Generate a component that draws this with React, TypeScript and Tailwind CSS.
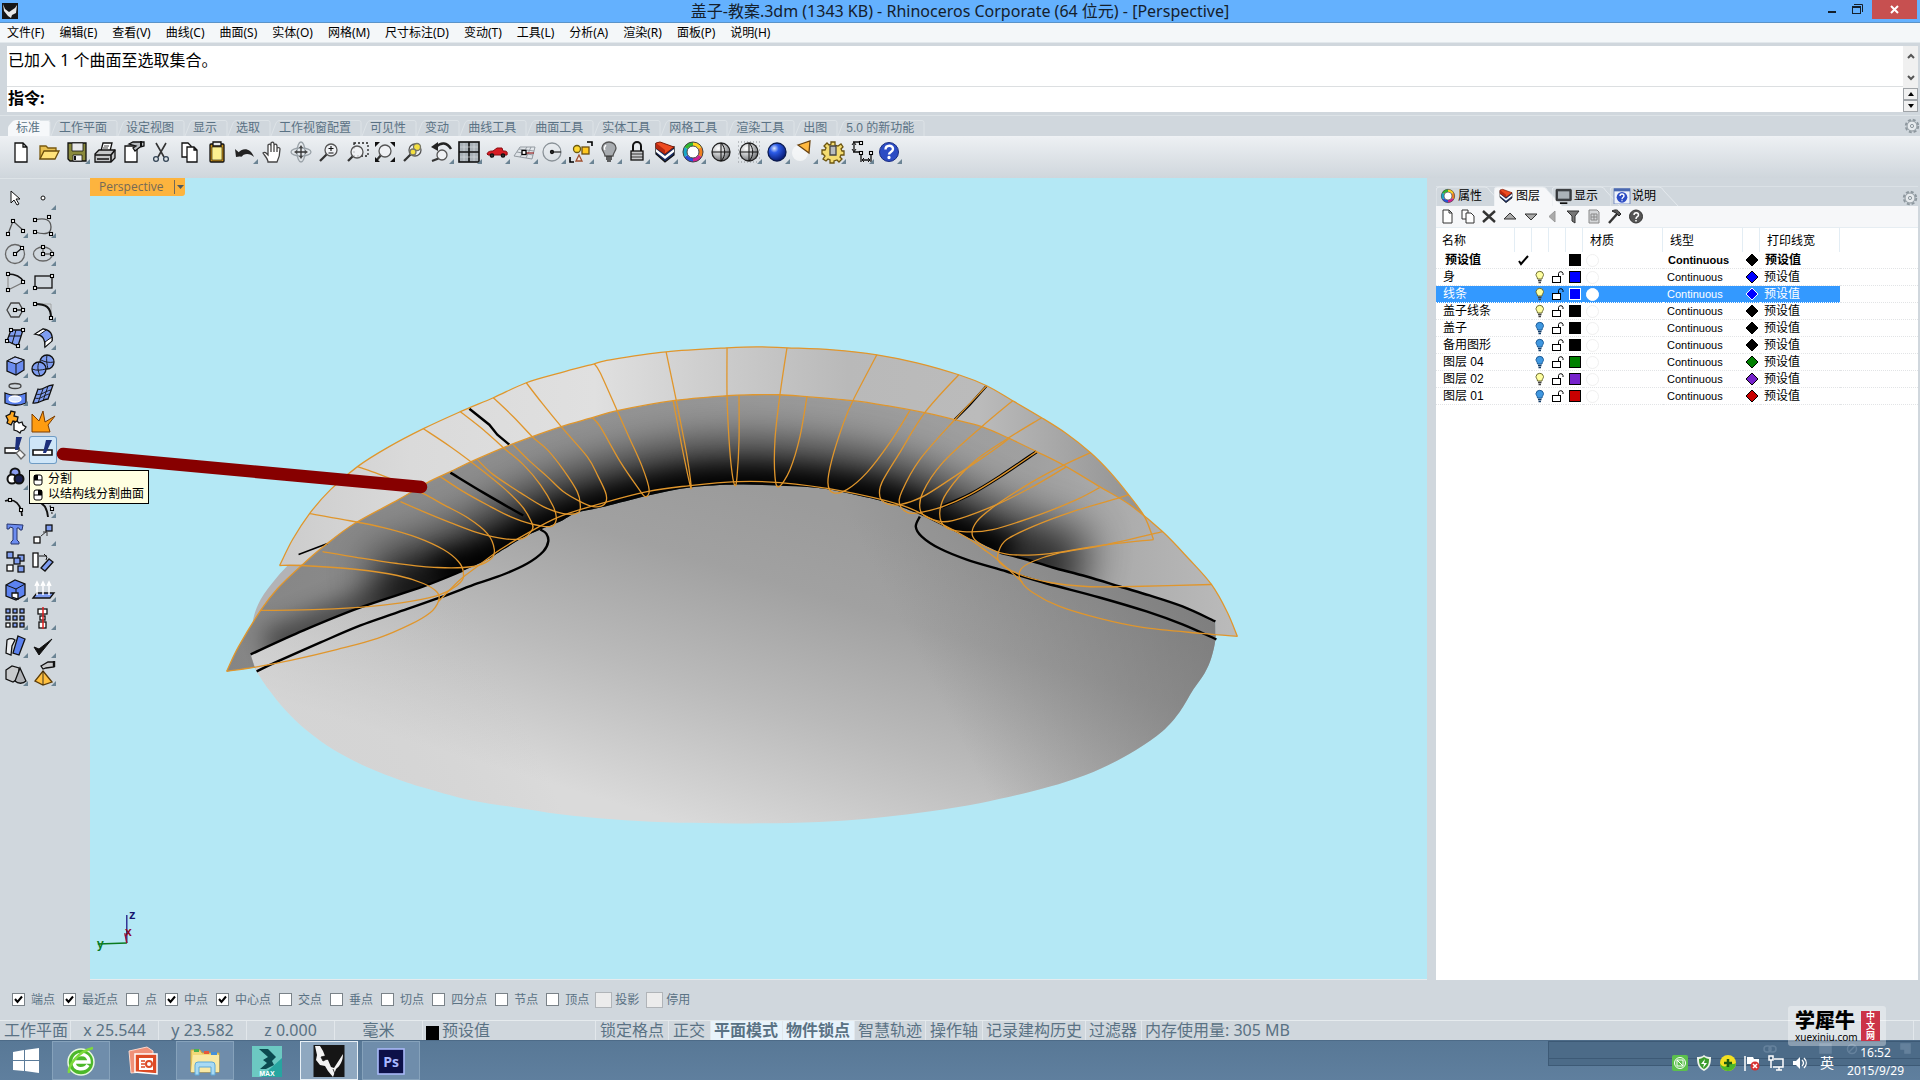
import React from "react";

const UI = "font-['Noto_Sans','Noto_Sans_CJK_SC',sans-serif]";
const SIM = "font-['Liberation_Sans','Noto_Sans_CJK_SC',sans-serif]";

/* ---------- curve helpers ---------- */

type Pt = [number, number];
const parse = (s: string): Pt[] =>
  s.trim().split(/\s+/).map((p) => p.split(",").map(Number) as Pt);

/** Catmull-Rom spline through the listed points, as SVG path data. */
const smooth = (s: string, start = "M") => {
  const p = parse(s);
  let d = `${start}${p[0][0]} ${p[0][1]}`;
  for (let i = 0; i < p.length - 1; i++) {
    const a = p[Math.max(i - 1, 0)];
    const b = p[i];
    const c = p[i + 1];
    const e = p[Math.min(i + 2, p.length - 1)];
    d += `C${(b[0] + (c[0] - a[0]) / 6).toFixed(1)} ${(b[1] + (c[1] - a[1]) / 6).toFixed(1)} ${(c[0] - (e[0] - b[0]) / 6).toFixed(1)} ${(c[1] - (e[1] - b[1]) / 6).toFixed(1)} ${c[0]} ${c[1]}`;
  }
  return d;
};
const reverse = (s: string) => s.trim().split(/\s+/).reverse().join(" ");
const shape = (...segs: string[]) =>
  segs.map((s, i) => smooth(s, i ? "L" : "M")).join("") + "Z";

/* ---------- model geometry ---------- */

const OUTER =
  "279,566 292,540 309,514 330,490 357,467 387,448 423,429 460,412 493,398 526,383 560,373 594,364 610,360 666,352 727,348 757,347 787,348 833,350 877,355 917,363 959,375 987,386 1013,401 1042,418 1067,434 1091,453 1110,472 1129,495 1145,517 1154,540";
const RIM =
  "226,672 238,647 260,611 277,589 302,565 323,547 354,524 398,500 427,483 450,472 473,461 508,446 532,437 561,427 592,418 617,411 673,401 727,396 753,395 780,395 807,397 853,401 887,406 925,413 955,420 982,427 1010,439 1037,452 1063,465 1100,487 1130,505 1163,532 1190,560 1212,585 1228,613 1238,637";
const INNER_RIGHT = "1216,622 1183,607 1150,596 1120,587 1087,577 1053,568 1027,560 1000,553";
const INNER_MID =
  "1000,553 977,542 957,533 920,515 900,507 880,501 840,492 813,488 777,486 737,485 690,488 648,496 605,507 577,513 560,522 540,530 523,538 503,550 487,560 463,571";
const INNER_LEFT = "463,571 423,587 360,608 303,631 250,655";
const LOOP_LEFT =
  "256,672 277,662 320,643 360,626 397,613 440,598 477,584 503,575 527,564 543,552 548,542 546,534 540,530";
const LOOP_RIGHT =
  "1217,640 1183,625 1147,612 1100,598 1047,584 1007,572 967,560 940,549 922,537 916,527 920,517";
const BELLY =
  "256,672 268,690 285,711 306,731 334,751 367,768 400,781 429,790 470,801 514,808 560,815 612,820 665,823 720,824 776,824 833,822 882,818 931,812 980,804 1029,793 1068,782 1102,769 1136,751 1163,732 1180,713 1194,690 1205,674 1212,658 1216,640 1216,622";

const ISO = [
  "1238,637 1202,634 1143,628 1100,619 1060,607 1033,593 1021,581 1021,570 1033,562 1057,554 1107,545 1163,532",
  "226,672 253,668 290,661 337,650 377,639 410,625 430,613 438,602 437,593 423,584 397,576 357,570 300,566 279,566",
  "260,611 320,610 370,607 410,602 440,595 460,583 463,573 458,562 443,550 417,538 383,528 343,520 309,514",
  "322,552 357,558 397,564 437,568 473,567 490,560 494,550 487,534 467,518 443,505 423,494 397,482 377,474 357,467",
  "400,502 423,512 450,523 477,533 503,539 522,539 532,530 531,522 522,507 503,488 477,467 450,447 423,429",
  "440,477 463,492 490,507 510,517 530,524 550,527 556,520 553,507 540,485 523,465 503,448 483,430 460,412",
  "477,460 493,475 520,493 543,507 563,514 578,513 580,505 577,492 563,470 547,450 532,437 513,417 493,398",
  "513,445 530,462 547,477 563,492 580,502 593,507 604,505 606,495 598,477 587,457 561,427 543,405 526,383",
  "592,418 600,427 620,462 637,487 645,497 649,490 642,467 630,440 617,411 600,373 594,364",
  "673,401 683,453 691,489 687,457 676,400 666,352",
  "739,396 739,440 737,477 735,486 732,473 729,440 727,396 727,348",
  "807,397 800,437 790,470 779,487 775,477 775,440 780,395 787,348",
  "910,411 890,443 867,473 847,490 833,493 828,483 832,460 843,425 853,401 877,355",
  "959,375 925,413 900,453 882,483 880,497 887,504 900,505 923,497 953,478 980,460 1000,446 1009,439",
  "987,386 955,420 920,460 902,492 900,505 908,513 920,513 943,507 970,495 1000,477 1037,452",
  "1013,401 982,427 943,463 923,493 921,512 933,520 953,521 997,505 1033,487 1067,467",
  "1042,418 1006,440 973,463 947,493 940,513 945,527 963,532 993,530 1040,515 1077,500 1100,488",
  "1091,453 1063,466 1033,482 997,505 977,522 973,537 987,548 1010,555 1050,554 1100,546 1154,540",
  "1129,495 1117,499 1073,512 1033,527 1007,540 999,552 1000,563 1020,575 1050,583 1087,587 1133,587 1212,585",
  "438,602 460,580 477,567 500,550 530,532 557,518 590,507 647,492 690,486 737,482 780,483 840,491 900,505 933,520 967,538 987,552 1000,562 1023,583",
];

function Scene() {
  const ring = shape(RIM, "1216,635 1216,622", INNER_RIGHT, INNER_MID, INNER_LEFT, "254,668 226,672");
  const belly = shape(BELLY, INNER_RIGHT, INNER_MID, INNER_LEFT);
  return (
    <svg viewBox="90 178 1337 802" className="block h-full w-full" aria-label="Perspective view of the lid model">
      <defs>
        <linearGradient id="belly" gradientUnits="userSpaceOnUse" x1="800" y1="500" x2="700" y2="830">
          <stop offset="0" stopColor="#9b9b9b" />
          <stop offset="0.25" stopColor="#a1a1a1" />
          <stop offset="0.6" stopColor="#bababa" />
          <stop offset="1" stopColor="#dadada" />
        </linearGradient>
        <linearGradient id="side" gradientUnits="userSpaceOnUse" x1="960" y1="740" x2="1216" y2="610">
          <stop offset="0" stopColor="#747474" stopOpacity="0" />
          <stop offset="1" stopColor="#747474" stopOpacity="0.75" />
        </linearGradient>
        <linearGradient id="glow" gradientUnits="userSpaceOnUse" x1="250" y1="720" x2="480" y2="620">
          <stop offset="0" stopColor="#d2d2d2" stopOpacity="0.6" />
          <stop offset="1" stopColor="#c0c0c0" stopOpacity="0" />
        </linearGradient>
        <linearGradient id="band" gradientUnits="userSpaceOnUse" x1="279" y1="0" x2="1154" y2="0">
          <stop offset="0" stopColor="#cccccc" />
          <stop offset="0.15" stopColor="#dadada" />
          <stop offset="0.36" stopColor="#e0e0e0" />
          <stop offset="0.48" stopColor="#cfcfcf" />
          <stop offset="0.65" stopColor="#b9b9b9" />
          <stop offset="0.8" stopColor="#bbbbbb" />
          <stop offset="1" stopColor="#8f8f8f" />
        </linearGradient>
        <linearGradient id="ringfill" gradientUnits="userSpaceOnUse" x1="226" y1="0" x2="1238" y2="0">
          <stop offset="0" stopColor="#858585" />
          <stop offset="0.5" stopColor="#989898" />
          <stop offset="0.8" stopColor="#a0a0a0" />
          <stop offset="1" stopColor="#bbbbbb" />
        </linearGradient>
        <clipPath id="ringclip"><path d={ring} /></clipPath>
        <filter id="wide" filterUnits="userSpaceOnUse" x="90" y="178" width="1337" height="802"><feGaussianBlur stdDeviation="22" /></filter>
        <filter id="tight" filterUnits="userSpaceOnUse" x="90" y="178" width="1337" height="802"><feGaussianBlur stdDeviation="11" /></filter>
      </defs>

      <path d={shape("298,555 277,577 260,600 252,623 250,655 256,672", "256,672 500,640 463,560")} fill="#b3b3b6" />
      <path d={belly} fill="url(#belly)" />
      <path d={belly} fill="url(#side)" />
      <path d={belly} fill="url(#glow)" />
      <path d={shape(OUTER, reverse(RIM).split(" ").slice(5, -4).join(" "))} fill="url(#band)" />
      <path d={ring} fill="url(#ringfill)" />
      <g clipPath="url(#ringclip)" fill="none" stroke="#000">
        <path d={smooth("380,600 463,571 503,550 540,530 605,507 690,488 777,486 880,501 957,533 1000,553 1080,578")} strokeWidth="84" opacity="0.75" filter="url(#wide)" />
        <path d={smooth("440,580 503,552 540,532 605,509 690,490 777,488 880,503 957,535 1010,557")} strokeWidth="36" filter="url(#tight)" />
        <path d={smooth("270,655 360,618 463,571")} strokeWidth="50" opacity="0.45" filter="url(#tight)" />
      </g>

      <g fill="none" stroke="#000" strokeWidth="2.4">
        <path d={smooth(INNER_LEFT)} />
        <path d={smooth(INNER_RIGHT)} />
        <path d={smooth(LOOP_LEFT)} />
        <path d={smooth(LOOP_RIGHT)} />
        <path d="M469 409 489 425 497 435 509 445" />
        <path d={smooth("450,473 483,493 523,516")} />
        <path d="M298 555 327 544" strokeWidth="1.5" />
        <path d="M987 386 970 405 955 420" />
        <path d={smooth("1037,452 1000,477 970,495 943,507")} strokeWidth="3.4" />
      </g>
      <g fill="none" stroke="#e0962c" strokeWidth="1.3">
        <path d={smooth(OUTER)} />
        <path d={smooth(RIM)} />
        {ISO.map((s) => <path key={s} d={smooth(s)} />)}
      </g>

      <g fill="none" strokeWidth="1.4">
        <path d="M126 944V916" stroke="#28288c" />
        <path d="M126 944 97 945" stroke="#0a7a1e" />
        <path d="M126 944 124 934" stroke="#9c1030" />
      </g>
      <g className="font-['Liberation_Mono',monospace] text-[12px] font-bold">
        <text x="128" y="920" fill="#14146e">z</text>
        <text x="124" y="937" fill="#8c0828">x</text>
        <text x="96" y="949" fill="#0a7a1e">y</text>
      </g>
    </svg>
  );
}

/* ---------- icons (28 × 28 grid) ---------- */

const Ico = ({ children, corner = false, label }: { children: React.ReactNode; corner?: boolean; label: string }) => (
  <button type="button" aria-label={label} className="block h-7 w-7 shrink-0">
    <svg viewBox="0 0 28 28" className="block h-7 w-7" fill="none" stroke="#111" strokeWidth="1.3">
      {children}
      {corner && <path d="M27 21v5h-5z" fill="#6b8494" stroke="none" />}
    </svg>
  </button>
);

const Node = ({ x, y }: { x: number; y: number }) => (
  <rect x={x - 1.5} y={y - 1.5} width="3" height="3" fill="#fff" stroke="#000" strokeWidth="1.1" />
);
const Lens = ({ x = 16, y = 12, r = 6 }: { x?: number; y?: number; r?: number }) => (
  <>
    <path d={`M${x - r * 0.7} ${y + r * 0.7}L5 23`} strokeWidth="2.2" stroke="#333" />
    <circle cx={x} cy={y} r={r} fill="#f2f4f6" fillOpacity="0.8" stroke="#555" />
  </>
);
const Wheel = () => (
  <g strokeWidth="4">
    <path d="M14 6a8 8 0 0 1 7 4" stroke="#ffd21e" />
    <path d="M21 10a8 8 0 0 1 0 8" stroke="#f08020" />
    <path d="M21 18a8 8 0 0 1-7 4" stroke="#d02090" />
    <path d="M14 22a8 8 0 0 1-7-4" stroke="#2a50d8" />
    <path d="M7 18a8 8 0 0 1 0-8" stroke="#18a8c8" />
    <path d="M7 10a8 8 0 0 1 7-4" stroke="#30b830" />
    <circle cx="14" cy="14" r="10" stroke="#444" strokeWidth="1" />
    <circle cx="14" cy="14" r="6" stroke="#444" strokeWidth="1" fill="#fff" />
  </g>
);
const LayersMark = () => (
  <>
    <path d="M5 6l9 6 9-3v8l-9 7-9-8z" fill="#1c2f66" stroke="#111" />
    <path d="M5 11l9 7 9-7v3l-9 7-9-7z" fill="#fff" stroke="none" />
    <path d="M5 5l4-1 14 5-9 7-9-6z" fill="#ee4a20" stroke="#7a1a08" strokeWidth="1" />
    <path d="M5 5l9 7v4l-9-6z" fill="#b82810" stroke="none" />
  </>
);
const Ball = () => (
  <>
    <circle cx="14" cy="14" r="9" fill="url(#gs)" stroke="#222" />
    <path d="M14 5v18M5 14h18M14 5c5 5 5 13 0 18" strokeWidth="1" />
  </>
);

const TOOLS: [string, boolean, React.ReactNode][] = [
  ["新建", false, <path d="M8 5h8l4 4v15H8zM16 5v4h4" fill="#fff" />],
  ["打开", false, <><path d="M5 21V8h6l2 2h8v4" fill="#e8c050" stroke="#7a5a10" /><path d="M5 21l4-8h15l-4 8z" fill="#ffe27a" stroke="#6b4e0c" /></>],
  ["保存", true, <><path d="M5 5h18v18H7l-2-2z" fill="#8a8a3c" /><path d="M9 5h11v8H9z" fill="#e8e8ea" strokeWidth="0.8" /><path d="M10 17h9v6h-9z" fill="#f4f4f4" strokeWidth="0.8" /><path d="M12 18v4" strokeWidth="2" /></>],
  ["打印", false, <><path d="M10 13l2-8h9l-2 8z" fill="#fff" /><path d="M13 8h5M12 10h5" strokeWidth="0.8" /><path d="M4 16l4-4h16v8l-4 4H4z" fill="#c4c6c8" /><path d="M4 17h16v7M20 17l4-5M6 21h12" strokeWidth="1.6" /></>],
  ["属性", false, <><path d="M6 8h12v16H6z" fill="#fff" /><path d="M10 6l4-2h11v4l-4 1-5 4-2-3 3-2z" fill="#b8bcc0" /><path d="M22 3v6" strokeWidth="2" /></>],
  ["剪切", false, <><path d="M9 5l8 14M19 5l-8 14" stroke="#333" strokeWidth="1.6" /><circle cx="9" cy="21" r="2.4" stroke="#345" /><circle cx="19" cy="21" r="2.4" stroke="#345" /></>],
  ["复制", false, <><path d="M7 5h6l3 3v11H7z" fill="#fff" /><path d="M12 9h7l3 3v12H12zM19 9v3h3" fill="#fff" /></>],
  ["粘贴", false, <><rect x="7" y="6" width="14" height="18" rx="1" fill="#c89018" /><path d="M9 9h10v13H9z" fill="#fbf090" strokeWidth="0.6" /><path d="M10 4h8v4h-8z" fill="#e8eaec" /></>],
  ["撤销", true, <><path d="M7 15c4-5 12-6 16 4-4-4-10-4-13 0z" fill="#222" stroke="none" /><path d="M4 11l8 7-7 1z" fill="#222" stroke="none" /></>],
  ["平移", false, <path d="M9 24c0-3-3-6-5-9 2-2 4 1 5 2V7c2-2 3 0 3 1V5c2-2 3 0 3 1v8-7c2-2 3 0 3 1v6-4c2-1 3 0 3 1 0 6-1 9-3 13zM12 8v6" fill="#fff" stroke="#444" />],
  ["旋转视图", false, <><ellipse cx="14" cy="14" rx="4" ry="10" stroke="#9aa2a8" /><ellipse cx="14" cy="14" rx="10" ry="4" stroke="#9aa2a8" /><path d="M14 9v10M9 14h10" stroke="#333" /><path d="M14 7l2 3h-4zM14 21l2-3h-4zM21 14l-3-2v4zM7 14l3-2v4z" fill="#444" stroke="none" /></>],
  ["缩放", false, <><Lens /><path d="M16 8v5M13.500 10.500h5M13.500 15h5" strokeWidth="1.1" /></>],
  ["框选缩放", false, <><rect x="11" y="5" width="14" height="13" strokeDasharray="2 2" stroke="#222" /><Lens x={14} y={14} /></>],
  ["缩放至范围", false, <><Lens x={14} y={13} /><path d="M4 9V4h5zM24 9V4h-5zM4 19v5h5zM24 19v5h-5z" fill="#111" stroke="none" /></>],
  ["缩放选取", false, <><Lens /><circle cx="18" cy="9" r="3.500" fill="#f4e040" stroke="#776" /><circle cx="14" cy="14" r="3" fill="#f4e040" stroke="#776" /></>],
  ["复原视图", true, <><Lens x={15} y={17} r={5} /><path d="M9 9c5-5 11-5 15 2" strokeWidth="2.400" stroke="#222" /><path d="M4 9l7-5v9z" fill="#222" stroke="none" /></>],
  ["四视图", true, <><rect x="4" y="4" width="20" height="20" fill="#aab2b8" strokeWidth="1.600" /><path d="M14 4v20M4 14h20" strokeWidth="1.600" /><path d="M9 5v8M19 5v8M9 15v8M19 15v8M5 9h18M5 19h18" stroke="#d8dce0" strokeWidth="0.600" /></>],
  ["右视图", true, <><path d="M4 16c1-3 4-3 6-3l4-3h5l1 3c3 0 5 0 4 4H5z" fill="#d81c24" stroke="#8a0c10" strokeWidth="1" /><circle cx="9" cy="17.500" r="1.700" fill="#333" /><circle cx="20" cy="17.500" r="1.700" fill="#333" /></>],
  ["工作平面", true, <><path d="M3 18l6-9h15l-3 12zM6 14l16 3M8 11l15 2M9 19l7-10M15 20l5-11" stroke="#8a9298" strokeWidth="0.900" /><path d="M14 15h9" stroke="#a03030" /><rect x="11" y="12.500" width="4" height="4" fill="#fff" stroke="#000" /></>],
  ["图元", true, <><circle cx="13" cy="14" r="9" stroke="#8a9298" /><path d="M13 14h9" stroke="#333" /><circle cx="13" cy="14" r="1.500" fill="#333" /></>],
  ["选取", true, <><path d="M20 4h5v4M3 19v5h4" stroke="#000" strokeWidth="1.600" /><circle cx="10" cy="11" r="3.500" fill="#ffd830" stroke="#6b5a10" /><rect x="15" y="9" width="7" height="7" fill="#ffc820" stroke="#6b4e10" /><path d="M12 17l3 6H9z" fill="#f4e8e0" stroke="#a05030" /></>],
  ["隐藏", true, <><path d="M10 18c0-3-3-5-3-8a7 6 0 0 1 14 0c0 3-3 5-3 8z" fill="#a8acb0" stroke="#555" /><path d="M11 19h6M11 21h6M12 23h4" strokeWidth="1.600" stroke="#333" /><path d="M11 7c-1 1-2 3-1 5" stroke="#fff" /></>],
  ["锁定", true, <><path d="M10 13V8a4 4 0 0 1 8 0v5" strokeWidth="2" /><rect x="8" y="13" width="12" height="9" fill="#c8cacc" /><path d="M8 16h12M8 19h12" strokeWidth="0.800" /></>],
  ["图层", true, <LayersMark />],
  ["颜色", true, <Wheel />],
  ["着色", false, <Ball />],
  ["着色模式", true, <><path d="M3 4h22M3 8h22M3 12h22M3 16h22M3 20h22M3 24h22" stroke="#a8acb0" strokeDasharray="1 2" /><Ball /></>],
  ["渲染", true, <circle cx="14" cy="14" r="9" fill="url(#bs)" stroke="#0a1a50" />],
  ["聚光灯", true, <><circle cx="9" cy="15" r="8" fill="#fff" opacity="0.6" stroke="none" /><path d="M7 7l12-4-1 12z" fill="#ffb840" stroke="#6b4310" /></>],
  ["选项", true, <><path d="M12 4h4v3l3 1 3-2 2 3-2 2 1 2h2v4h-3l-1 2 2 2-3 3-2-2-3 1v2h-4v-3l-2-1-2 2-3-2 2-3-2-2H3v-4h3l1-2-2-2 3-3 2 2 2-1z" fill="#f4dc70" stroke="#6b5410" /><path d="M11 8h6v9h-6z" fill="#b8bcc0" stroke="#444" /></>],
  ["尺寸标注", true, <><path d="M6 4h8M6 14h8M7 5v8M14 14v10M24 14v10M15 22h8" stroke="#111" /><path d="M5 7l2-3 2 3M5 11l2 3 2-3M17 20l-2 2 2 2M21 20l2 2-2 2" strokeWidth="1" /><Node x={14} y={5} /><Node x={14} y={15} /><Node x={24} y={15} /></>],
  ["说明", true, <><circle cx="14" cy="14" r="9.500" fill="#2c4cc4" stroke="#1a2c80" strokeWidth="1" /><path d="M10.500 11.500c0-5 7.500-5 7.500-.5 0 3-4 3-4 5.500" stroke="#fff" strokeWidth="2.400" /><circle cx="14" cy="19.500" r="1" fill="#fff" stroke="#fff" /></>],
];

const BLUE = "#7f9df0";
const SIDE: [string, boolean, React.ReactNode][] = [
  ["选取", false, <path d="M10 7v12l3-3 3 5 2-1-3-5h4z" fill="#fff" strokeWidth="1" />],
  ["点", true, <circle cx="14" cy="14" r="2" fill="#fff" strokeWidth="1" />],
  ["多重直线", true, <><path d="M7 22l5-13 11 10" stroke="#555" /><Node x={7} y={22} /><Node x={12} y={9} /><Node x={22} y={19} /></>],
  ["曲线", true, <><path d="M6 8c10-3 16 0 16 7s-6 8-16 5" stroke="#555" /><Node x={6} y={8} /><Node x={20} y={5} /><Node x={6} y={20} /><Node x={22} y={22} /></>],
  ["圆", true, <><circle cx="14" cy="14" r="9.500" stroke="#666" /><path d="M14 14l7-6" /><Node x={14} y={14} /><Node x={21} y={8} /></>],
  ["椭圆", true, <><ellipse cx="14" cy="14" rx="9.500" ry="7" stroke="#666" /><path d="M14 14V7M14 14h9" stroke="#666" /><Node x={14} y={14} /><Node x={14} y={7} /><Node x={23} y={14} /></>],
  ["圆弧", true, <><path d="M7 22V6" stroke="#999" /><path d="M7 22l16-8" stroke="#777" /><path d="M7 6c8 0 13 3 16 8" stroke="#111" strokeWidth="1.500" /><Node x={7} y={6} /><Node x={7} y={22} /><Node x={22} y={14} /></>],
  ["矩形", true, <><rect x="6" y="8" width="17" height="12" /><Node x={23} y={8} /><Node x={6} y={20} /></>],
  ["多边形", true, <><path d="M10 7h8l4 7-4 7h-8l-4-7z" stroke="#444" /><path d="M14 14h8" /><Node x={14} y={14} /><Node x={22} y={14} /></>],
  ["曲线圆角", true, <><path d="M6 8h16v14" stroke="#999" strokeWidth="0.800" /><path d="M6 8c11 0 16 3 16 14" strokeWidth="2" /><Node x={6} y={8} /><Node x={22} y={22} /></>],
  ["曲面", true, <><path d="M10 6h12l-5 16-11-5z" fill={BLUE} /><path d="M15 6l-4 14M8 12h12" strokeWidth="1" /><Node x={10} y={6} /><Node x={22} y={6} /><Node x={6} y={17} /><Node x={17} y={22} /></>],
  ["曲面圆角", true, <><path d="M6 10l8-5c8 1 10 6 9 12l-7 6c0-8-2-12-10-13z" fill={BLUE} /><path d="M6 10l8-5 3 1-7 5zM16 18v5l7-6v-4z" fill="#fff" strokeWidth="1" /></>],
  ["立方体", true, <><path d="M6 9l8-4 9 3v10l-8 5-9-4z" fill="#6b8cf0" /><path d="M6 9l8-4 9 3-8 4z" fill="#b8c8fa" strokeWidth="1" /><path d="M15 12v11" strokeWidth="1" /></>],
  ["布尔", true, <><circle cx="18" cy="10" r="7" fill={BLUE} /><circle cx="10" cy="17" r="7" fill={BLUE} /><path d="M12 8c4 2 8 3 13 2M18 3c-1 5 0 9 1 14M3 17c5 2 9 1 14 0M10 10c-2 5-1 9 1 14" strokeWidth="0.900" /></>],
  ["投影", true, <><ellipse cx="14" cy="6" rx="6" ry="2.500" stroke="#444" /><path d="M4 13c7 3 14 3 21 0v10c-7 3-14 3-21 0z" fill="#5c82f0" /><ellipse cx="14" cy="19" rx="6" ry="3" fill="#dce8ff" stroke="#fff" /></>],
  ["网格", true, <><path d="M9 9c5 2 8-4 15-4l-5 14c-5 0-9 5-15 4z" fill={BLUE} /><path d="M7 14c5 2 9-3 15-4M6 18c5 2 9-3 14-4M14 9l-5 14M19 6l-5 15" strokeWidth="0.900" /></>],
  ["组合", false, <><path d="M5 8l4-2 1-3 4 1-1 4 4 1-1 5-4-1-2 4-4-2 1-3z" fill="#ffa820" /><path d="M13 15l3-2 2 2 3-1 1 3 3 2-2 3-3 1-1 2-3-2-3-1z" fill="#fff" /></>],
  ["炸开", false, <path d="M3 6l7 7 4-10 2 11 10-6-7 9 2 7H3z" fill="#ff9c10" stroke="#7a3c00" strokeWidth="1" />],
  ["修剪", false, <><path d="M4 12h14v5H4z" fill="#fff" /><path d="M15 17l4-3 5 5-4 4z" fill="#f4f4f4" stroke="#666" /><path d="M15 1h6l-4 13h-3z" fill="#1c2f7c" stroke="none" /></>],
  ["分割", false, <><path d="M4 14h19v5H4z" fill="#fff" strokeWidth="1.600" /><path d="M17 4h6l-6 13h-3z" fill="#1c2f7c" stroke="none" /></>],
  ["群组", true, <><circle cx="14" cy="9" r="4.500" fill="#8a9cf0" strokeWidth="2" /><circle cx="11" cy="15" r="4.500" fill="#fff" strokeWidth="2" /><circle cx="18" cy="15" r="4.500" fill="#1a2050" strokeWidth="2" /></>],
  ["解散", false, <circle cx="14" cy="14" r="5" fill="#8a9cf0" />],
  ["编辑点", false, <><path d="M4 9c10-3 16 3 17 15" strokeWidth="1.700" /><Node x={9} y={8} /><Node x={20} y={18} /></>],
  ["控制点", true, <><path d="M4 9c8 0 14 5 15 16" strokeWidth="1.900" /><path d="M10 6c8 0 13 8 13 17" strokeDasharray="1.500 2" /><Node x={23} y={17} /></>],
  ["文字", false, <path d="M6 4l16 1-1 5h-2l-1-2h-2v12l2 2v2h-8v-2l2-2V8l-3-1-1 2H6z" fill="#6b8cf0" stroke="#26346c" strokeWidth="1" />],
  ["移动", true, <><rect x="5" y="17" width="6" height="6" fill="#fff" /><rect x="17" y="5" width="6" height="6" fill={BLUE} /><path d="M12 16l6-5M14 12h4v4" stroke="#333" strokeWidth="1" /></>],
  ["复制", false, <><rect x="6" y="4" width="6" height="6" fill={BLUE} /><rect x="17" y="7" width="6" height="6" fill={BLUE} /><rect x="13" y="10" width="6" height="6" fill={BLUE} /><rect x="6" y="17" width="6" height="6" fill="#fff" /><rect x="17" y="18" width="6" height="6" fill={BLUE} /></>],
  ["旋转", false, <><rect x="4" y="5" width="5" height="14" fill="#fff" /><path d="M10 8h8M15 6l3 3-1 3" strokeWidth="1" /><path d="M12 20l8-9 4 3-8 9z" fill={BLUE} /></>],
  ["实体编辑", true, <><path d="M5 9l9-5 10 4v11l-9 5-10-4z" fill="#5c82f0" /><path d="M5 9l10 4 9-5M15 13v11" strokeWidth="1" /><path d="M11 17h6v6l-6-2z" fill="#fff" /></>],
  ["挤出", true, <><path d="M4 22l4-5h17l-4 5z" fill={BLUE} /><path d="M8 19V7M14 19V7M20 19V7M6 10l2-4 2 4M12 10l2-4 2 4M18 10l2-4 2 4" stroke="#fff" strokeWidth="1.500" /></>],
  ["阵列", true, <>{[5, 12, 19].map((x) => [5, 12, 19].map((y) => <rect key={`${x}-${y}`} x={x} y={y} width="4" height="4" fill={x === 5 && y === 19 ? "#fff" : BLUE} />))}</>],
  ["对齐", true, <><rect x="9" y="5" width="9" height="5" fill="#fff" /><rect x="11" y="12" width="5" height="4" fill="#fff" /><rect x="10" y="18" width="7" height="6" fill="#fff" /><path d="M14 3v22" stroke="#e02020" strokeWidth="1.500" /></>],
  ["弯曲", true, <><path d="M6 8c3-2 5-2 8 0l-3 6-1 9-5-2z" fill="#eceef0" /><path d="M17 4l7 3-6 16-6-2z" fill="#5c82f0" /></>],
  ["检查", true, <path d="M5 15l5 8L23 7 10 17z" fill="#111" strokeWidth="1" />],
  ["实体", true, <><path d="M5 10l6-4 7 2v10l-6 4-7-3z" fill="#c8cacc" /><path d="M19 8l6 13c-3 3-8 3-11 0z" fill="#b0b2b6" /></>],
  ["爆炸", true, <><path d="M14 11l9 11-9 3-8-4z" fill="#ffc040" stroke="#5c3c08" /><path d="M14 11v14" strokeWidth="0.800" /><path d="M12 6l7-4h6v5l-8 1-3 1z" fill="#c8cacc" /><path d="M25 1v6" strokeWidth="2.400" /></>],
];

const Gear = () => (
  <svg viewBox="0 0 16 16" className="h-4 w-4" fill="none" stroke="#8d979e">
    <circle cx="8" cy="8" r="6.300" strokeWidth="1.800" strokeDasharray="3 1.950" />
    <circle cx="8" cy="8" r="5" fill="#e6eaed" />
    <circle cx="8" cy="8" r="1.600" />
  </svg>
);

/* ---------- data ---------- */

const MENUS = ["文件(F)", "编辑(E)", "查看(V)", "曲线(C)", "曲面(S)", "实体(O)", "网格(M)", "尺寸标注(D)", "变动(T)", "工具(L)", "分析(A)", "渲染(R)", "面板(P)", "说明(H)"];
const TABS = ["标准", "工作平面", "设定视图", "显示", "选取", "工作视窗配置", "可见性", "变动", "曲线工具", "曲面工具", "实体工具", "网格工具", "渲染工具", "出图", "5.0 的新功能"];
const SNAPS: [string, boolean][] = [["端点", true], ["最近点", true], ["点", false], ["中点", true], ["中心点", true], ["交点", false], ["垂点", false], ["切点", false], ["四分点", false], ["节点", false], ["顶点", false]];

type Layer = { name: string; color: string; on?: boolean; current?: boolean; selected?: boolean };
const LAYERS: Layer[] = [
  { name: "预设值", color: "#000000", current: true },
  { name: "身", color: "#0000ff", on: true },
  { name: "线条", color: "#0000ff", on: true, selected: true },
  { name: "盖子线条", color: "#000000", on: true },
  { name: "盖子", color: "#000000" },
  { name: "备用图形", color: "#000000" },
  { name: "图层 04", color: "#008000" },
  { name: "图层 02", color: "#7722cc", on: true },
  { name: "图层 01", color: "#c80000" },
];

/* ---------- panels ---------- */

function LayerRow({ layer }: { layer: Layer }) {
  const sel = layer.selected;
  const box = `h-[17px] border-b border-dotted ${sel ? "border-white bg-[#3399ff] text-white" : "border-[#e2e4e6]"}`;
  const icon = `${box} p-0`;
  const text = `${box} pt-px leading-[15px]`;
  return (
    <tr className={layer.current ? "font-bold" : ""}>
      <td className={`${text} ${layer.current ? "pl-[9px]" : "pl-[7px]"}`}>{layer.name}</td>
      <td className={icon}>
        {layer.current && <svg viewBox="0 0 17 16" className="h-4 w-[17px]"><path d="M4 9l2 3 7-8" fill="none" stroke="#000" strokeWidth="2" /></svg>}
      </td>
      <td className={icon}>
        {!layer.current && (
          <svg viewBox="0 0 17 16" className="h-4 w-[17px]">
            <path d="M5.500 10C5.500 8 4 7.500 4 5.500a3.800 3.800 0 0 1 7.500 0C11.500 7.500 10 8 10 10z" fill={layer.on ? "#ffffa0" : "#3f97e0"} stroke={layer.on ? "#6b6b30" : "#1c5c98"} />
            <path d="M6 11.500h3.500M6.500 13.500h2.500" stroke={layer.on ? "#444" : "#123c68"} strokeWidth="1.500" />
          </svg>
        )}
      </td>
      <td className={icon}>
        {!layer.current && (
          <svg viewBox="0 0 17 16" className="h-4 w-[17px]" fill="none" stroke="#000">
            <rect x="3.500" y="7.500" width="8" height="6" fill="#fff" />
            <path d="M9.500 7V4.500a2.300 2.300 0 0 1 4.500 0V6" />
          </svg>
        )}
      </td>
      <td className={icon}>
        <div className={`ml-[3px] h-3 w-3 border ${sel ? "border-white" : "border-black"}`} style={{ background: layer.color }} />
      </td>
      <td className={icon}>
        <div className={`ml-[3px] h-[13px] w-[13px] rounded-full border bg-white ${sel ? "border-white" : "border-[#f0f0f0]"}`} />
      </td>
      <td className={`${text} ${layer.current ? "pl-[5px]" : "pl-1"} text-[11px]`}>Continuous</td>
      <td className={icon}>
        <svg viewBox="0 0 17 16" className="h-4 w-[17px]"><path d="M9 2l6 6-6 6-6-6z" fill={layer.color} stroke={sel ? "#fff" : "#000"} /></svg>
      </td>
      <td className={`${text} ${layer.current ? "pl-[5px]" : "pl-1"}`}>预设值</td>
      <td className="h-[17px] border-b border-dotted border-[#e2e4e6] p-0" />
    </tr>
  );
}

const PANEL_TABS: [string, React.ReactNode][] = [
  ["属性", <Wheel />],
  ["图层", <LayersMark />],
  ["显示", <><rect x="2" y="4" width="23" height="17" rx="1" fill="#3c4044" stroke="#222" /><rect x="5" y="7" width="17" height="11" fill="#aab2b8" stroke="none" /><path d="M8 25h11" strokeWidth="3" /></>],
  ["说明", <><rect x="2" y="3" width="24" height="23" fill="#eef2fa" stroke="#4a68b0" /><path d="M2 5h24" stroke="#4a68b0" strokeWidth="4" /><circle cx="14" cy="16" r="8" fill="#2c4cc4" stroke="none" /><path d="M11 14c0-4 6-4 6 0 0 2-3 2-3 5M14 20.500v1.500" stroke="#fff" strokeWidth="2" /></>],
];

const PANEL_TOOLS: [string, React.ReactNode][] = [
  ["新图层", <path d="M4 2h6l3 3v10H4zM10 2v3h3" fill="#fff" stroke="#333" />],
  ["新子图层", <><path d="M2 2h6v9H2z" fill="#fff" stroke="#333" /><path d="M6 5h5l3 3v7H6z" fill="#fff" stroke="#333" /></>],
  ["删除", <path d="M2 3l12 11M14 3L2 14" stroke="#333" strokeWidth="2.400" />],
  ["上移", <path d="M2 11l6-6 6 6z" fill="#aaa" stroke="#333" />],
  ["下移", <path d="M2 6l6 6 6-6z" fill="#aaa" stroke="#333" />],
  ["上一层", <path d="M11 3v11L5 8.500z" fill="#aaa" stroke="#999" />],
  ["过滤器", <path d="M2 3h12l-4 5v7l-3-2V8z" fill="#777" stroke="#333" />],
  ["表格", <path d="M3 2h8l2 2v11H3zM5 6h6v6H5zM8 6v6M5 9h6" fill="#d4d6d8" stroke="#888" />],
  ["工具", <><path d="M2 15L10 6" stroke="#333" strokeWidth="2.400" /><path d="M5 3c4-2 6-1 7 1l2 2-2 2-3-3z" fill="#555" stroke="#222" /></>],
  ["说明", <><circle cx="8" cy="8.500" r="6.500" fill="#555" stroke="#333" /><path d="M6 7c0-3 4.500-3 4.500 0 0 2-2.500 1.500-2.500 4M8 12v1.500" fill="none" stroke="#fff" strokeWidth="1.500" /></>],
];

function LayerPanel() {
  const th = "h-6 border-r border-[#e3edf4] p-0 pt-px text-left font-normal";
  return (
    <aside className={`flex w-[493px] shrink-0 flex-col pt-2 pr-0.5 pl-[9px] text-[12px] leading-4 text-black ${SIM}`}>
      <div className="flex h-5 items-end justify-between border-t border-[#dbe1e6]">
        <div className="flex" role="tablist">
          {PANEL_TABS.map(([name, icon], i) => (
            <button
              key={name}
              type="button"
              role="tab"
              aria-selected={i === 1}
              className="relative flex h-5 w-[58px] items-center gap-px pl-[3px]"
            >
              <svg viewBox="0 0 70 20" className="absolute top-0 left-0 h-5 w-[70px]" aria-hidden="true">
                <path d="M0 20V5q0-4 3-4h46q3 0 5 4l14 15" fill={i === 1 ? "#f6f7f9" : "none"} stroke="#e4e9ed" />
              </svg>
              <svg viewBox="2 2 24 24" className="relative h-4 w-[18px] shrink-0" fill="none" stroke="#111">{icon}</svg>
              <span className="relative whitespace-nowrap">{name}</span>
            </button>
          ))}
        </div>
        <button type="button" aria-label="面板选项"><Gear /></button>
      </div>
      <div className="flex h-[22px] items-center border-b border-[#e6edf2] bg-[#f6f7f9]">
        {PANEL_TOOLS.map(([name, icon]) => (
          <button key={name} type="button" aria-label={name} className="flex w-[21px] justify-center">
            <svg viewBox="0 0 16 17" className="h-[17px] w-4">{icon}</svg>
          </button>
        ))}
      </div>
      <div className="flex-1 bg-white">
        <table className="w-full table-fixed border-separate border-spacing-0">
          <colgroup>
            <col className="w-[79px]" /><col className="w-[17px]" /><col className="w-[17px]" /><col className="w-[17px]" /><col className="w-[17px]" />
            <col className="w-20" /><col className="w-20" /><col className="w-[17px]" /><col className="w-20" /><col />
          </colgroup>
          <thead>
            <tr>
              <th className={`${th} pl-[6px]`}>名称</th>
              <th className={th} /><th className={th} /><th className={th} /><th className={th} />
              <th className={`${th} pl-[7px]`}>材质</th>
              <th className={`${th} pl-[7px]`}>线型</th>
              <th className={th} />
              <th className={`${th} pl-[7px]`}>打印线宽</th>
              <th className="p-0" />
            </tr>
          </thead>
          <tbody>{LAYERS.map((l) => <LayerRow key={l.name} layer={l} />)}</tbody>
        </table>
      </div>
    </aside>
  );
}

function Mouse({ right = false }: { right?: boolean }) {
  return (
    <svg viewBox="0 0 10 12" className="h-3 w-2.5">
      <rect x="1" y="1" width="8" height="10" rx="2" fill="#fff" stroke="#000" />
      <path d={right ? "M5 1h4v5H5z" : "M1 1h4v5H1z"} fill="#000" />
      <path d="M1 6h8" stroke="#000" />
    </svg>
  );
}

const cellCls = "flex shrink-0 items-center border-l border-[#e2e7eb] whitespace-nowrap";

function StatusBar() {
  return (
    <div className={`flex h-5 shrink-0 overflow-hidden border-t border-[#e6ebee] bg-[#d0d7dd] text-[16px] leading-[19px] text-[#5a7284] ${UI}`}>
      <button type="button" className="w-[70px] shrink-0 pl-1 text-left whitespace-nowrap">工作平面</button>
      <span className={`${cellCls} w-22 justify-center`}>x 25.544</span>
      <span className={`${cellCls} w-22 justify-center`}>y 23.582</span>
      <span className={`${cellCls} w-22 justify-center`}>z 0.000</span>
      <button type="button" className={`${cellCls} w-22 justify-center`}>毫米</button>
      <button type="button" className={`${cellCls} w-[173px] gap-[3px] pl-[3px]`}>
        <span className="mt-1 h-[14px] w-[13px] bg-black" />预设值
      </button>
      <button type="button" className={`${cellCls} w-[73px] pl-1`}>锁定格点</button>
      <button type="button" className={`${cellCls} w-[42px] pl-1`}>正交</button>
      <button type="button" className={`${cellCls} w-[72px] bg-[#e8f3fb] pl-[3px] font-bold`}>平面模式</button>
      <button type="button" className={`${cellCls} w-[72px] bg-[#e8f3fb] pl-[3px] font-bold`}>物件锁点</button>
      <button type="button" className={`${cellCls} w-[71px] pl-[3px]`}>智慧轨迹</button>
      <button type="button" className={`${cellCls} w-[57px] pl-1`}>操作轴</button>
      <button type="button" className={`${cellCls} w-[103px] pl-[3px]`}>记录建构历史</button>
      <button type="button" className={`${cellCls} w-[56px] pl-[3px]`}>过滤器</button>
      <span className={`${cellCls} grow pl-[3px]`}>内存使用量: 305 MB</span>
      <span className={`${cellCls} w-[7px]`} />
    </div>
  );
}

const TASKS: [string, string, React.ReactNode][] = [
  ["浏览器", "border-[#86a2bb] bg-[#6f8dab]", <><circle cx="16" cy="17" r="13" fill="#4cb82a" stroke="#e8f8e0" strokeWidth="1.500" /><path d="M8 17h16c0-10-15-10-15 0 0 9 11 8 14 3" fill="none" stroke="#fff" strokeWidth="3.500" /><path d="M4 28C3 20 14 6 28 3" fill="none" stroke="#7edb3c" strokeWidth="2.500" /></>],
  ["演示文稿", "border-transparent", <><path d="M2 6l18-4 6 4v20L4 28z" fill="#f09078" stroke="#fbd8cc" /><path d="M8 9h22v20l-22-2z" fill="#dd4a24" stroke="#fff" strokeWidth="1.500" /><rect x="12" y="13" width="14" height="12" fill="#fff" /><path d="M14 16h4M14 19h4M14 22h4" stroke="#dd4a24" strokeWidth="1.500" /><circle cx="22" cy="19" r="3" fill="none" stroke="#dd4a24" strokeWidth="2" /></>],
  ["文件资源管理器", "border-[#86a2bb] bg-[#6f8dab]", <><path d="M2 5h9l2 3h17v19H2z" fill="#f2d878" stroke="#d4a838" /><path d="M4 10h26v17H2z" fill="#fae9a4" /><path d="M5 4h5v3H5z" fill="#4caf50" /><path d="M15 6h5v3h-5z" fill="#e85838" /><path d="M22 7h6v3h-6z" fill="#4890d8" /><path d="M6 30V20q0-3 3-3h14q3 0 3 3v10h-4v-8H10v8z" fill="#a8daf4" stroke="#5ca8d8" /></>],
  ["3ds Max", "border-transparent", <><rect x="1" y="1" width="30" height="31" fill="#27a5a0" /><path d="M1 1h30v12L10 32H1z" fill="#8ad8d0" opacity="0.7" /><path d="M8 4h9l8 8-4 4 2 4-8 4H9l7-6-4-3 5-3z" fill="#0c4a50" /><text x="16" y="31" textAnchor="middle" fill="#fff" fontSize="7" fontWeight="bold" fontFamily="Liberation Sans">MAX</text></>],
  ["Rhinoceros", "border-[#e8f0f6] bg-[#8fa8c0]", <><rect x="0.500" y="0" width="31" height="32" fill="#161616" /><path d="M2 1h5l3 5 2 5-3 2 6 2 3 7 3 1 9-14c0 7-3 12-7 15l-3 8-5-6-3-5-5-1-4-5 1-5z" fill="#f4f4f4" /><path d="M8 12l4-1 2 3-4 2zM20 24l2 5" fill="#161616" stroke="#161616" strokeWidth="0.800" /></>],
  ["Photoshop", "border-[#86a2bb] bg-[#6f8dab]", <><rect x="3" y="4" width="26" height="25" fill="#0c1048" stroke="#a8b8f8" strokeWidth="1.600" /><text x="16" y="22" textAnchor="middle" fill="#a8b8ff" fontSize="14" fontWeight="bold" fontFamily="Open Sans">Ps</text></>],
];

const TRAY: React.ReactNode[] = [
  <><rect width="16" height="16" rx="2" fill="#5cc04c" /><circle cx="8" cy="8" r="5.500" fill="none" stroke="#fff" /><path d="M5 5h6v6H5zM5 5l6 6" fill="none" stroke="#fff" /></>,
  <><path d="M8 0c2 2 5 2 7 2 0 7-1 11-7 14C2 13 1 9 1 2c2 0 5 0 7-2z" fill="#eef4ea" /><path d="M8 2c2 1 4 2 5 2 0 5-1 8-5 10-4-2-5-5-5-10 1 0 3-1 5-2z" fill="#3c9c2c" /><path d="M9 4L5 9h3l-1 4 4-5H8z" fill="#fff" /></>,
  <><circle cx="8" cy="8" r="8" fill="#f4e020" /><path d="M0 8a8 8 0 0 0 16 0c-4 3-6-2-9 2-2 3-6 1-7-2z" fill="#4cb82a" /><path d="M8 4v8M4 8h8" stroke="#1c5c10" strokeWidth="2.500" /></>,
  <><path d="M1 1v15" stroke="#fff" strokeWidth="1.500" /><path d="M3 2h6l1 2h5v7H9L8 9H3z" fill="#fff" /><circle cx="11" cy="11" r="4.500" fill="#d83030" /><path d="M9 9l4 4M13 9l-4 4" stroke="#fff" strokeWidth="1.500" /></>,
  <><path d="M6 4h9v8H5M8 15h6M11 12v3" fill="none" stroke="#fff" strokeWidth="1.500" /><path d="M1 1h4v4H1zM3 5v8" fill="none" stroke="#fff" strokeWidth="1.500" /></>,
  <><path d="M1 6h3l4-4v12l-4-4H1z" fill="#fff" /><path d="M10 5c2 2 2 4 0 6M12 3c3 3 3 7 0 10" fill="none" stroke="#fff" strokeWidth="1.300" /></>,
];

function Taskbar() {
  return (
    <footer className={`relative flex h-10 shrink-0 items-stretch justify-between border-t border-[#4d6b88] bg-linear-to-b from-[#587896] to-[#5f7f9e] text-white ${UI}`}>
      <div className="flex">
        <button type="button" aria-label="开始" className="flex w-13 items-center justify-center">
          <svg viewBox="0 0 28 28" className="h-7 w-7" fill="#fff"><path d="M1 5l11-2v10H1zM13 3l14-2v12H13zM1 14h11v10L1 23zM13 14h14v12l-14-2z" /></svg>
        </button>
        <div className="flex gap-1">
          {TASKS.map(([name, cls, icon]) => (
            <button key={name} type="button" aria-label={name} className={`flex w-[58px] items-center justify-center border ${cls}`}>
              <svg viewBox="0 0 32 32" className="h-8 w-8">{icon}</svg>
            </button>
          ))}
        </div>
      </div>
      <div className="absolute top-0 right-0 h-[25px] w-[372px] border border-r-0 border-[#3d5a76] bg-[#4c6b88]">
        <div className="mt-4 border-t border-[#3d5a76]" />
        <svg viewBox="0 0 150 14" className="absolute top-0 right-2 h-[14px] w-[150px] opacity-30" fill="none" stroke="#9fb6cc" strokeWidth="1.500">
          <rect x="2" y="4" width="7" height="6" rx="3" /><rect x="7" y="4" width="7" height="6" rx="3" />
          <rect x="58" y="2" width="11" height="9" fill="#9fb6cc" /><circle cx="90" cy="7" r="4.500" /><path d="M87 10l6-6" />
          <path d="M139 2h9v9h-5v-4h-4z" fill="#9fb6cc" />
        </svg>
      </div>
      <div className="relative flex items-center pr-4">
        <div className="flex items-center gap-2 pt-1">
          {TRAY.map((icon, i) => <svg key={i} viewBox="0 0 16 16" className="h-4 w-4">{icon}</svg>)}
        </div>
        <span className="ml-3 pt-1 text-[14px] leading-5">英</span>
        <time className="ml-[13px] flex flex-col pt-0.5 text-center text-[12px] leading-[18px]">
          <span>16:52</span>
          <span>2015/9/29</span>
        </time>
      </div>
      <div className="absolute right-[34px] bottom-[34px] flex h-10 w-[98px] items-center gap-[3px] rounded-[3px] bg-white/35 pl-[7px] text-black" role="img" aria-label="学犀牛中文网">
        <div className="flex w-[63px] flex-col">
          <span className="text-[20px] leading-[22px] font-black whitespace-nowrap">学犀牛</span>
          <span className="text-[10px] leading-[11px]">xuexiniu.com</span>
        </div>
        <div className="flex h-[30px] w-[19px] flex-col items-center justify-center bg-[#cc3348] text-[9px] leading-[10px] font-bold text-white">
          <span>中</span><span>文</span><span>网</span>
        </div>
      </div>
    </footer>
  );
}

export default function App() {
  return (
    <div className={`flex h-screen flex-col overflow-hidden bg-[#d0d7dd] text-black ${UI}`}>
      <svg className="absolute h-0 w-0" aria-hidden="true">
        <defs>
          <radialGradient id="gs" cx="0.35" cy="0.3" r="0.7"><stop offset="0" stopColor="#fff" /><stop offset="0.5" stopColor="#c4c6c8" /><stop offset="1" stopColor="#77797c" /></radialGradient>
          <radialGradient id="bs" cx="0.35" cy="0.3" r="0.7"><stop offset="0" stopColor="#dce8ff" /><stop offset="0.35" stopColor="#2c5ce8" /><stop offset="1" stopColor="#081c78" /></radialGradient>
        </defs>
      </svg>

      <header className="relative flex h-[23px] shrink-0 items-center justify-between border-b border-[#5a93c8] bg-[#64b1fe]">
        <svg viewBox="0 0 16 16" className="ml-0.5 h-4 w-4">
          <rect width="16" height="16" fill="#161616" />
          <path d="M1 1l2 5 4 3 6-4 2-3-1 8-4 2-1 3-3-2-4-5z" fill="#e8e8e8" />
        </svg>
        <h1 className="text-[16px] leading-[22px] whitespace-nowrap text-[#14202c]">
          盖子-教案.3dm (1343 KB) - Rhinoceros Corporate (64 位元) - [Perspective]
        </h1>
        <div className="absolute top-0 right-[3px] flex h-[19px]">
          <button type="button" aria-label="最小化" className="w-[26px]"><svg viewBox="0 0 26 19" className="h-[19px]"><path d="M8 12h8" stroke="#14202c" strokeWidth="2" /></svg></button>
          <button type="button" aria-label="还原" className="w-[26px]"><svg viewBox="0 0 26 19" className="h-[19px]" fill="none" stroke="#14202c"><rect x="6.500" y="6.500" width="8" height="7" /><path d="M6.500 7.500h8M8 4.500h8.500V12" /></svg></button>
          <button type="button" aria-label="关闭" className="w-[45px] bg-[#c75050]"><svg viewBox="0 0 45 19" className="h-[19px]"><path d="M19 6l7 7M26 6l-7 7" stroke="#fff" strokeWidth="2" /></svg></button>
        </div>
        <span className="w-[18px]" />
      </header>

      <nav className="flex h-5 shrink-0 items-center gap-[15px] border-b border-[#e2e8ec] bg-[#f4f7f9] pl-[7px] text-[12px] leading-4">
        {MENUS.map((m) => <button key={m} type="button" className="whitespace-nowrap">{m}</button>)}
      </nav>

      <section className="flex shrink-0 py-[3px] pr-0.5 pl-[7px] text-[16px]">
        <div className="flex-1 bg-white">
          <p className="h-10 pt-0.5 pl-px leading-6">已加入 1 个曲面至选取集合。</p>
          <div className="flex h-[26px] items-start border-t border-[#dcdfe1] pl-px leading-[23px]">
            <label htmlFor="command" className="font-bold">指令:</label>
            <input id="command" className="ml-2 flex-1 bg-transparent outline-none" />
          </div>
        </div>
        <div className="flex w-[15px] flex-col bg-[#f0f0f0]">
          <button type="button" aria-label="向上滚动" className="flex h-5 items-center justify-center"><svg viewBox="0 0 8 6" className="h-1.5 w-2"><path d="M1 5l3-3 3 3" fill="none" stroke="#555" strokeWidth="2" /></svg></button>
          <button type="button" aria-label="向下滚动" className="mt-0.5 flex h-5 items-center justify-center"><svg viewBox="0 0 8 6" className="h-1.5 w-2"><path d="M1 1l3 3 3-3" fill="none" stroke="#555" strokeWidth="2" /></svg></button>
          <button type="button" aria-label="上一个指令" className="flex h-3 items-center justify-center border border-[#a0a4a8]"><svg viewBox="0 0 6 4" className="h-1 w-1.5"><path d="M0 4l3-4 3 4z" /></svg></button>
          <button type="button" aria-label="下一个指令" className="flex h-3 items-center justify-center border border-[#a0a4a8]"><svg viewBox="0 0 6 4" className="h-1 w-1.5"><path d="M0 0l3 4 3-4z" /></svg></button>
        </div>
      </section>

      <div className={`flex h-[21px] shrink-0 items-end justify-between border-t border-[#dde3e7] pl-2 text-[12px] text-[#5a7284] ${SIM}`}>
        <div className="flex h-4" role="tablist">
          {TABS.map((t, i) => (
            <div key={t} className="flex">
              {i === 0 && <svg viewBox="0 0 8 16" className="h-4 w-2"><path d="M0 16V8q0-2 3-5 2-3 5-3v16z" fill="#f6f8fa" /></svg>}
              <button type="button" role="tab" aria-selected={i === 0} className={`h-4 border-t leading-[15px] whitespace-nowrap ${i === 0 ? "border-[#f6f8fa] bg-[#f6f8fa]" : "border-[#dde3e7]"}`}>{t}</button>
              <svg viewBox="0 0 19 16" className="h-4 w-[19px]" fill="none" stroke="#dde3e7">
                {i === 0 && <path d="M0 0h8q2 0 2 2v14H0z" fill="#f6f8fa" stroke="none" />}
                <path d={i === TABS.length - 1 ? "M0 .5h8q2 0 2 2V16" : "M0 .5h8q2 0 2 2V16M11 16l5-13q1-2 3-2.500"} />
              </svg>
            </div>
          ))}
        </div>
        <button type="button" aria-label="工具列选项" className="mb-0.5"><Gear /></button>
      </div>

      <div className="flex h-[42px] shrink-0 items-start border-t border-[#eef1f4] bg-linear-to-b from-[#edf0f3] to-[#cfd6dc] pt-px pl-[7px]" role="toolbar">
        {TOOLS.map(([name, corner, icon], i) => <Ico key={i} label={name} corner={corner}>{icon}</Ico>)}
      </div>

      <main className="relative flex min-h-0 flex-1">
        <div className="w-[90px] shrink-0 border-t border-[#dde3e7] pt-[5px] pl-px">
          <div className="grid w-14 grid-cols-2" role="toolbar">
            {SIDE.map(([name, corner, icon], i) => (
              <div key={i} className={name === "分割" ? "h-7 rounded-[3px] bg-[#cfe6f8] ring-1 ring-[#6f9cc4] ring-inset" : "h-7"}>
                <Ico label={name} corner={corner}>{icon}</Ico>
              </div>
            ))}
          </div>
        </div>
        <section className="relative min-w-0 flex-1 border-b border-[#e6ebee] bg-[#b4e8f5]">
          <Scene />
          <div className="absolute top-0 left-0 flex h-[18px] w-[95px] items-center rounded-br-[3px] bg-[#fdb43e] pl-[9px] font-['Open_Sans',sans-serif] text-[12px] leading-4 text-[#746a58]">
            <span className="w-[75px]">Perspective</span>
            <button type="button" aria-label="视图菜单" className="flex h-[14px] items-center border-l border-[#746a58] pl-0.5">
              <svg viewBox="0 0 7 5" className="h-[5px] w-[7px]"><path d="M0 0h7L3.500 4z" fill="#4f5a60" /></svg>
            </button>
          </div>
        </section>
        <LayerPanel />

        <svg viewBox="0 0 440 350" className="pointer-events-none absolute top-0 left-0 h-[350px] w-[440px]" aria-hidden="true">
          <path d="M63 276L421 309" stroke="#870000" strokeWidth="12.500" strokeLinecap="round" />
        </svg>
        <div role="tooltip" className={`absolute top-[292px] left-[29px] flex flex-col border border-black bg-[#ffffe1] py-px pr-1 pl-[3px] text-[12px] leading-[15px] text-black ${SIM}`}>
          <span className="flex items-center gap-[5px]"><Mouse />分割</span>
          <span className="flex items-center gap-[5px] whitespace-nowrap"><Mouse right />以结构线分割曲面</span>
        </div>
      </main>

      <form className={`flex h-10 shrink-0 items-center pb-px pl-3 text-[12px] leading-4 text-[#5a7284] ${SIM}`}>
        {SNAPS.map(([name, on]) => (
          <label key={name} className="relative mr-2 flex items-center gap-1.5 last-of-type:mr-0">
            <input type="checkbox" defaultChecked={on} className="peer h-[13px] w-[13px] appearance-none border border-[#7a8288] bg-white" />
            <svg viewBox="0 0 13 13" className="pointer-events-none absolute left-0 hidden h-[13px] w-[13px] peer-checked:block"><path d="M3 6l2.500 3L10 3.500" fill="none" stroke="#000" strokeWidth="2" /></svg>
            {name}
          </label>
        ))}
        <div className="flex gap-[7px] pl-1.5">
          {["投影", "停用"].map((name) => (
            <label key={name} className="flex items-center gap-[3px]">
              <input type="checkbox" className="h-4 w-[17px] appearance-none border border-[#b0b4b8] bg-[#ececec]" />
              {name}
            </label>
          ))}
        </div>
      </form>
      <StatusBar />
      <Taskbar />
    </div>
  );
}
